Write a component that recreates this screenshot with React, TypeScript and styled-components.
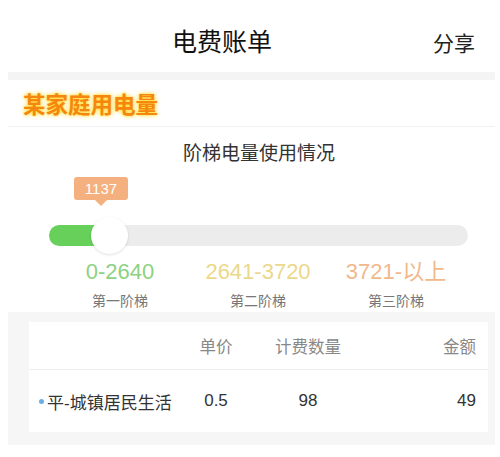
import React from 'react';
import styled, { createGlobalStyle } from 'styled-components';

const GlobalStyle = createGlobalStyle`
  body {
    margin: 0;
    background: #fff;
    font-family: "Liberation Sans", "Noto Sans CJK SC", sans-serif;
  }
`;

const Page = styled.div`
  width: 500px;
  height: 457px;
  overflow: hidden;
  background: #fff;
`;

const Header = styled.div`
  position: relative;
  height: 72px;
  display: flex;
  align-items: center;
  justify-content: center;
  padding-top: 8px;
  box-sizing: border-box;
`;

const Title = styled.div`
  font-size: 25px;
  color: #111;
  margin-left: -56px;
`;

const Share = styled.div`
  position: absolute;
  right: 25px;
  top: 27px;
  font-size: 21px;
  color: #222;
`;

const Band = styled.div`
  height: 8px;
  margin: 0 5px 0 8px;
  background: #f4f4f4;
`;

const SectionTitle = styled.div`
  height: 46px;
  margin: 0 5px 0 8px;
  padding-left: 15px;
  display: flex;
  align-items: center;
  border-bottom: 1px solid #f1f1f1;
  font-size: 22.5px;
  font-weight: bold;
  color: #f5860f;
  text-shadow: 0 0 2px #ffe033, 0 0 5px #ffd42a;
`;

const SubTitle = styled.div`
  padding-top: 16px;
  line-height: 22px;
  text-align: center;
  font-size: 19px;
  color: #333;
  padding-left: 18px;
`;

const SliderWrap = styled.div`
  position: relative;
  margin: 12px 0 0 49px;
  width: 419px;
  height: 78px;
`;

const Track = styled.div`
  position: absolute;
  left: 0;
  right: 0;
  top: 48px;
  height: 21px;
  border-radius: 11px;
  background: #ececec;
  overflow: hidden;
`;

const Fill = styled.div`
  height: 100%;
  background: #66d05a;
`;

const Knob = styled.div`
  position: absolute;
  top: 40px;
  width: 37px;
  height: 37px;
  margin-left: -18px;
  border-radius: 50%;
  background: #fff;
  box-shadow: 0 1px 3px rgba(0, 0, 0, 0.12);
`;

const Tip = styled.div`
  position: absolute;
  top: 0;
  width: 54px;
  height: 23px;
  margin-left: -27px;
  border-radius: 3px;
  background: #f4b07e;
  color: #fff;
  font-size: 15px;
  line-height: 23px;
  text-align: center;
  &::after {
    content: '';
    position: absolute;
    left: 50%;
    bottom: -6px;
    margin-left: -6px;
    border-left: 6px solid transparent;
    border-right: 6px solid transparent;
    border-top: 6px solid #f4b07e;
  }
`;

const Steps = styled.div`
  display: flex;
  padding-left: 51px;
  margin-top: 5px;
`;

const Step = styled.div`
  width: 138px;
  text-align: center;
`;

const Range = styled.div<{ $color: string }>`
  font-size: 22px;
  line-height: 24px;
  color: ${(p) => p.$color};
`;

const StepName = styled.div`
  margin-top: 8px;
  font-size: 14px;
  line-height: 18px;
  color: #777;
`;

const TablePanel = styled.div`
  margin: 2px 5px 0 8px;
  padding: 10px 7px 13px 21px;
  background: #f6f6f6;
`;

const Card = styled.div`
  background: #fff;
`;

const Row = styled.div<{ $head?: boolean }>`
  display: grid;
  grid-template-columns: 150px 54px 130px 1fr;
  align-items: center;
  height: ${(p) => (p.$head ? '47px' : '62px')};
  padding: 0 12px 0 10px;
  border-bottom: ${(p) => (p.$head ? '1px solid #eeeeee' : 'none')};
  font-size: ${(p) => (p.$head ? '16.5px' : '17px')};
  color: ${(p) => (p.$head ? '#888' : '#333')};
`;

const Cell = styled.div<{ $align?: string }>`
  text-align: ${(p) => p.$align || 'center'};
  white-space: nowrap;
`;

const Name = styled.div`
  display: flex;
  align-items: center;
  white-space: nowrap;
`;

const Dot = styled.span`
  width: 5px;
  height: 5px;
  border-radius: 50%;
  background: #6aaee3;
  margin-right: 3px;
`;

const steps = [
  { range: '0-2640', name: '第一阶梯', color: '#8dd282' },
  { range: '2641-3720', name: '第二阶梯', color: '#ecd88a' },
  { range: '3721-以上', name: '第三阶梯', color: '#f1b98b' },
];

export default function App() {
  const knobX = 60;

  return (
    <Page>
      <GlobalStyle />
      <Header>
        <Title>电费账单</Title>
        <Share>分享</Share>
      </Header>
      <Band />
      <SectionTitle>某家庭用电量</SectionTitle>
      <SubTitle>阶梯电量使用情况</SubTitle>
      <SliderWrap>
        <Tip style={{ left: knobX - 8 }}>1137</Tip>
        <Track>
          <Fill style={{ width: knobX }} />
        </Track>
        <Knob style={{ left: knobX }} />
      </SliderWrap>
      <Steps>
        {steps.map((s) => (
          <Step key={s.name}>
            <Range $color={s.color}>{s.range}</Range>
            <StepName>{s.name}</StepName>
          </Step>
        ))}
      </Steps>
      <TablePanel>
        <Card>
          <Row $head>
            <Cell />
            <Cell>单价</Cell>
            <Cell>计费数量</Cell>
            <Cell $align="right">金额</Cell>
          </Row>
          <Row>
            <Name>
              <Dot />
              平-城镇居民生活
            </Name>
            <Cell>0.5</Cell>
            <Cell>98</Cell>
            <Cell $align="right">49</Cell>
          </Row>
        </Card>
      </TablePanel>
    </Page>
  );
}
